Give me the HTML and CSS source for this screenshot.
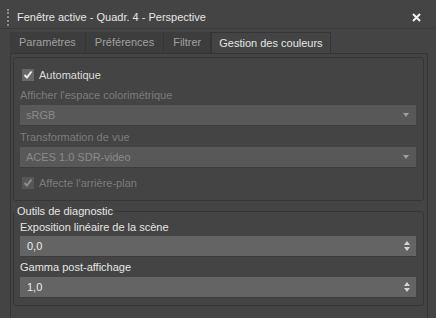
FILE: index.html
```html
<!DOCTYPE html>
<html lang="fr">
  <head>
    <meta charset="UTF-8" />
    <title>Fenêtre active - Gestion des couleurs</title>
    <link rel="stylesheet" href="styles.css">
  </head>
  <body>
    <div class="titlebar">
      <span class="grip"></span>
      <span class="title">Fenêtre active - Quadr. 4 - Perspective</span>
      <svg class="close" width="9" height="9" viewBox="0 0 9 9">
        <path d="M1 1 L8 8 M8 1 L1 8" stroke="#f2f2f2" stroke-width="2" />
      </svg>
    </div>

    <div class="tabs">
      <div class="tab">Paramètres</div>
      <div class="tab">Préférences</div>
      <div class="tab">Filtrer</div>
      <div class="tab active">Gestion des couleurs</div>
    </div>

    <div class="panel">
      <div class="group">
        <div class="check-row">
          <span class="checkbox">
            <svg width="10" height="10" viewBox="0 0 10 10">
              <path d="M1.5 5 L4 7.5 L8.5 1.5" stroke="#ececec" stroke-width="2" fill="none" />
            </svg>
          </span>
          <span>Automatique</span>
        </div>

        <div class="label disabled">Afficher l'espace colorimétrique</div>
        <div class="dropdown">
          <span>sRGB</span>
          <span class="arrow"></span>
        </div>

        <div class="label label-gap disabled">Transformation de vue</div>
        <div class="dropdown">
          <span>ACES 1.0 SDR-video</span>
          <span class="arrow"></span>
        </div>

        <div class="check-row check-row-last disabled">
          <span class="checkbox checkbox-disabled">
            <svg width="10" height="10" viewBox="0 0 10 10">
              <path d="M1.5 5 L4 7.5 L8.5 1.5" stroke="#8e8e8e" stroke-width="2" fill="none" />
            </svg>
          </span>
          <span>Affecte l'arrière-plan</span>
        </div>
      </div>

      <fieldset class="group diag">
        <legend>Outils de diagnostic</legend>
        <div class="label">Exposition linéaire de la scène</div>
        <div class="spinner">
          <span>0,0</span>
          <span class="spin-arrows"><i class="up"></i><i class="down"></i></span>
        </div>
        <div class="label label-gap2">Gamma post-affichage</div>
        <div class="spinner">
          <span>1,0</span>
          <span class="spin-arrows"><i class="up"></i><i class="down"></i></span>
        </div>
      </fieldset>
    </div>
  </body>
</html>
```

FILE: styles.css
```css
body {
  margin: 0;
  width: 436px;
  height: 318px;
  overflow: hidden;
  display: flex;
  flex-direction: column;
  background-color: #444444;
  font-family: "Liberation Sans", Arial, sans-serif;
  font-size: 11px;
  color: #dcdcdc;
}

.titlebar {
  display: flex;
  align-items: center;
  box-sizing: border-box;
  height: 29px;
  padding: 6px 15px 0 7px;
  border-bottom: 1px solid #3a3a3a;
}

.grip {
  width: 0;
  height: 17px;
  border-left: 2px dotted #8c8c8c;
  margin-right: 8px;
}

.title {
  flex-grow: 1;
  color: #e6e6e6;
}

.close {
  display: block;
}

.tabs {
  display: flex;
  margin: 3px 0 0 10px;
  height: 21px;
}

.tab {
  padding: 0 9px;
  line-height: 21px;
  background-color: #3d3d3d;
  color: #a0a0a0;
  border-right: 1px solid #353535;
}

.tab.active {
  background-color: #444444;
  color: #e6e6e6;
  border: 1px solid #353535;
  border-bottom: none;
  line-height: 20px;
  padding: 0 7px;
}

.panel {
  flex: 1;
  min-height: 0;
  margin: 0 8px 0 10px;
  border: 1px solid #353535;
  border-bottom: none;
  padding: 3px 3px 0 2px;
}

.group {
  display: flex;
  flex-direction: column;
  border: 1px solid #363636;
  border-radius: 3px;
  padding: 7px 7px 2px 6px;
}

.check-row {
  display: flex;
  align-items: center;
  height: 20px;
  padding-left: 2px;
}

.check-row-last {
  height: 30px;
}

.checkbox {
  display: flex;
  align-items: center;
  justify-content: center;
  width: 12px;
  height: 12px;
  margin-right: 5px;
  background-color: #676767;
}

.checkbox-disabled {
  background-color: #565656;
}

.label {
  display: flex;
  align-items: center;
  height: 20px;
}

.label-gap {
  height: 21px;
}

.disabled {
  color: #7c7c7c;
}

.dropdown,
.spinner {
  display: flex;
  align-items: center;
  justify-content: space-between;
  box-sizing: border-box;
  height: 21px;
  padding: 0 6px 0 6px;
  background-color: #585858;
  border-bottom: 1px solid #3c3c3c;
  color: #8a8a8a;
}

.arrow {
  width: 0;
  height: 0;
  border-left: 3px solid transparent;
  border-right: 3px solid transparent;
  border-top: 4px solid #a0a0a0;
  margin-right: 1px;
}

fieldset.diag {
  margin: 3px 0 0 0;
  min-width: 0;
  padding: 0 7px 7px 6px;
}

.diag legend {
  padding: 0 2px;
  margin-left: -5px;
  line-height: 14px;
  color: #e6e6e6;
}

.diag .label {
  height: 18px;
  color: #e6e6e6;
}

.diag .label-gap2 {
  height: 20px;
}

.spinner {
  background-color: #646464;
  color: #ececec;
  padding-left: 7px;
}

.spin-arrows {
  display: flex;
  flex-direction: column;
  gap: 2px;
}

.spin-arrows i {
  display: block;
  width: 0;
  height: 0;
  border-left: 3px solid transparent;
  border-right: 3px solid transparent;
}

.spin-arrows .up {
  border-bottom: 4px solid #d6d6d6;
}

.spin-arrows .down {
  border-top: 4px solid #d6d6d6;
}
```
